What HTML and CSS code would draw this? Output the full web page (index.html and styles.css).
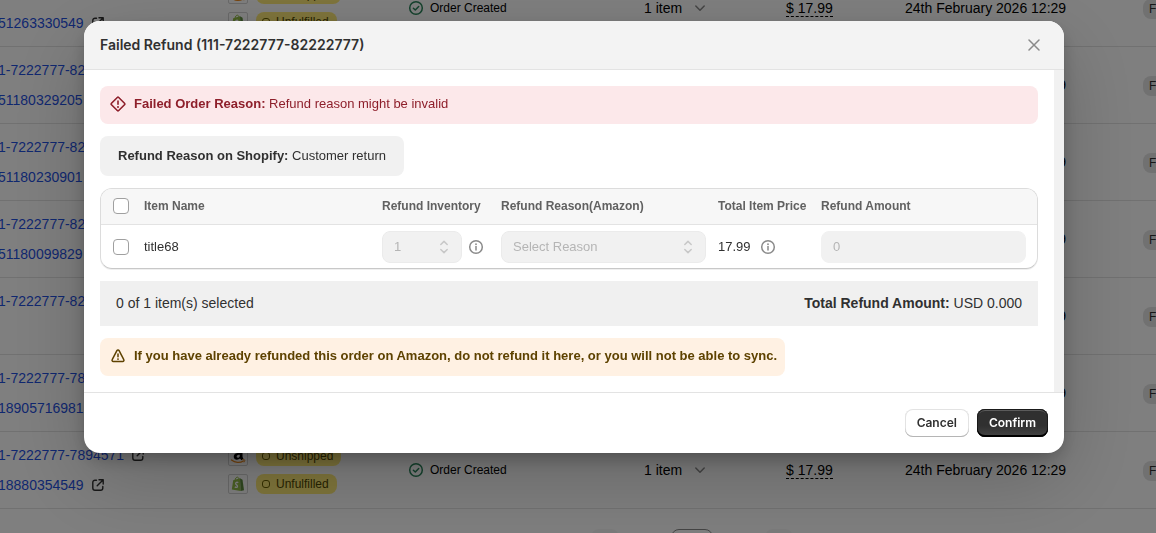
FILE: index.html
```html
<!DOCTYPE html>
<html lang="en">
<head>
    <meta charset="UTF-8">
    <meta name="viewport" content="width=device-width, initial-scale=1.0">
    <title>Failed Refund</title>
    <link rel="stylesheet" href="styles.css">
    <script src="orders.js" defer></script>
</head>
<body>
    <!-- Shared icons -->
    <svg class="sprite" aria-hidden="true">
        <symbol id="icon-external" viewBox="0 0 12 12">
            <path d="M4.500 1.200H3A2.200 2.200 0 0 0 .8 3.400V9A2.200 2.200 0 0 0 3 11.200h5.600A2.200 2.200 0 0 0 10.800 9V7.500M7 .8h4.200V5M11 1 5.200 6.800" fill="none" stroke="#303030" stroke-width="1.400" stroke-linecap="round" stroke-linejoin="round"/>
        </symbol>
        <symbol id="icon-amazon" viewBox="0 0 20 20">
            <path transform="translate(-2.500 -1) scale(1.250 1.150)" d="M11.600 11.800c-1.700 1.700-5 1.300-5-1.500 0-2.800 2.700-3.400 4.800-3.500V6.400c0-1.500-2-1.300-2.300 0L6.900 6.100C7.300 3 13.600 2.700 13.600 6.200v3.900c0 .8.300 1 .8 1.600l-1.600 1.500zM11.400 8.400c-1.400 0-2.500.4-2.500 1.700 0 1.500 2.500 1.500 2.500-.8z" fill="#000"/>
            <path d="M3.500 14c3.500 2.900 8.500 3 12 .9" fill="none" stroke="#f08a1c" stroke-width="1.200" stroke-linecap="round"/>
            <path d="M14.300 13.700c2.900-.6 2.900.6 1.700 2.600" fill="none" stroke="#f08a1c" stroke-width="1"/>
        </symbol>
        <symbol id="icon-shopify" viewBox="0 0 20 20">
            <path d="M5.200 6.300 12 4.300l.7 12.700-8.900-1.600z" fill="#95bf47"/>
            <path d="m12 4.300 2.500 1.500 1.500 10.400-3.300.8z" fill="#5e8e3e"/>
            <path d="M7 6.500C7.200 4.300 8.500 3 9.600 3.200c1 .2 1.300 1.400 1.400 2.500" fill="none" stroke="#95bf47" stroke-width="1"/>
            <path d="M10.300 8.600c-1.300-.7-2.700-.3-2.700.9 0 1.300 2 1.500 1.900 2.900-.1 1.300-1.600 1.300-2.700.5" fill="none" stroke="#fff" stroke-width="1.300"/>
        </symbol>
        <symbol id="icon-check" viewBox="0 0 16 16">
            <circle cx="8" cy="8" r="6.300" fill="none" stroke="#29845a" stroke-width="1.500"/>
            <path d="m5.400 8.200 1.900 1.800 3.400-3.500" fill="none" stroke="#29845a" stroke-width="1.500" stroke-linecap="round" stroke-linejoin="round"/>
        </symbol>
        <symbol id="icon-chevron" viewBox="0 0 12 12">
            <path d="m1.800 4 4.200 4.200L10.200 4" fill="none" stroke="#8a8a8a" stroke-width="1.500" stroke-linecap="round" stroke-linejoin="round"/>
        </symbol>
        <symbol id="icon-info" viewBox="0 0 16 16">
            <circle cx="8" cy="8" r="6.300" fill="none" stroke="#8a8a8a" stroke-width="1.500"/>
            <path d="M8 7.600v3.400" fill="none" stroke="#8a8a8a" stroke-width="1.500" stroke-linecap="round"/>
            <circle cx="8" cy="5.200" r="0.900" fill="#8a8a8a"/>
        </symbol>
        <symbol id="icon-updown" viewBox="0 0 12 16">
            <path d="M2.800 5.500 6 2.400l3.200 3.100M2.800 10.500 6 13.600l3.200-3.100" fill="none" stroke="#c8c8c8" stroke-width="1.500" stroke-linecap="round" stroke-linejoin="round"/>
        </symbol>
    </svg>

    <main class="orders">
        <table class="orders-table">
            <colgroup>
                <col class="col-ids"><col class="col-status"><col class="col-created">
                <col class="col-items"><col class="col-price"><col class="col-date"><col class="col-state">
            </colgroup>
            <tbody id="orderRows"></tbody>
        </table>
        <div class="pagination">
            <span class="page-step"></span>
            <span class="page-current"></span>
            <span class="page-step"></span>
        </div>
    </main>

    <div class="overlay">
        <div class="modal" role="dialog" aria-modal="true" aria-labelledby="modalTitle">
            <header class="modal-header">
                <h2 id="modalTitle">Failed Refund (111-7222777-82222777)</h2>
                <button type="button" class="close" aria-label="Close">
                    <svg viewBox="0 0 12 12" width="12" height="12"><path d="m1 1 10 10M11 1 1 11" fill="none" stroke="#8a8a8a" stroke-width="1.500" stroke-linecap="round"/></svg>
                </button>
            </header>

            <div class="modal-body">
                <div class="banner banner-critical">
                    <svg viewBox="0 0 16 16" width="16" height="16"><path d="M7.300 1.500a1 1 0 0 1 1.400 0l5.800 5.800a1 1 0 0 1 0 1.400l-5.800 5.800a1 1 0 0 1-1.400 0L1.500 8.700a1 1 0 0 1 0-1.400zM8 5v3.300" fill="none" stroke="#8e1f2b" stroke-width="1.600" stroke-linecap="round"/><circle cx="8" cy="10.900" r="1" fill="#8e1f2b"/></svg>
                    <p><b>Failed Order Reason:</b> Refund reason might be invalid</p>
                </div>

                <p class="reason"><b>Refund Reason on Shopify:</b> Customer return</p>

                <table class="items">
                    <colgroup>
                        <col class="col-check"><col><col class="col-inventory">
                        <col class="col-reason"><col class="col-total"><col class="col-amount">
                    </colgroup>
                    <thead>
                        <tr>
                            <th><input type="checkbox" aria-label="Select all items"></th>
                            <th>Item Name</th>
                            <th>Refund Inventory</th>
                            <th>Refund Reason(Amazon)</th>
                            <th>Total Item Price</th>
                            <th>Refund Amount</th>
                        </tr>
                    </thead>
                    <tbody>
                        <tr>
                            <td><input type="checkbox" aria-label="Select title68"></td>
                            <td>title68</td>
                            <td>
                                <div class="with-info">
                                    <div class="select select-small">
                                        <select aria-label="Refund Inventory" disabled><option>1</option></select>
                                        <svg class="updown"><use href="#icon-updown"/></svg>
                                    </div>
                                    <svg class="icon-16"><use href="#icon-info"/></svg>
                                </div>
                            </td>
                            <td>
                                <div class="select">
                                    <select aria-label="Refund Reason" disabled><option>Select Reason</option></select>
                                    <svg class="updown"><use href="#icon-updown"/></svg>
                                </div>
                            </td>
                            <td>
                                <div class="with-info price">
                                    <span>17.99</span>
                                    <svg class="icon-16"><use href="#icon-info"/></svg>
                                </div>
                            </td>
                            <td><input type="text" class="amount" aria-label="Refund Amount" value="0" disabled></td>
                        </tr>
                    </tbody>
                </table>

                <div class="summary">
                    <span>0 of 1 item(s) selected</span>
                    <span><b>Total Refund Amount:</b> USD 0.000</span>
                </div>

                <div class="banner banner-warning">
                    <svg viewBox="0 0 16 16" width="16" height="16"><path d="M6.900 2.600a1.250 1.250 0 0 1 2.200 0l4.700 9.100a1.200 1.200 0 0 1-1.100 1.800H3.300a1.200 1.200 0 0 1-1.100-1.800zM8 6v2.800" fill="none" stroke="#5e4200" stroke-width="1.500" stroke-linecap="round" stroke-linejoin="round"/><circle cx="8" cy="11.100" r="0.900" fill="#5e4200"/></svg>
                    <p><b>If you have already refunded this order on Amazon, do not refund it here, or you will not be able to sync.</b></p>
                </div>
            </div>

            <footer class="modal-footer">
                <button type="button" class="btn">Cancel</button>
                <button type="button" class="btn btn-primary">Confirm</button>
            </footer>
        </div>
    </div>
</body>
</html>
```
FILE: orders.js
```js
// [amazon order id, shopify order id]
const orders = [
    ["1-7222777-8222277", "51263330549"],
    ["1-7222777-8222277", "51180329205"],
    ["1-7222777-8222277", "51180230901"],
    ["1-7222777-8222277", "51180099829"],
    ["1-7222777-8222277", ""],
    ["1-7222777-7894571", "18905716981"],
    ["1-7222777-7894571", "18880354549"]
];

function orderLink(id) {
    if (!id) return '<div class="order-link"></div>';
    return `<div class="order-link"><a href="#">${id}</a><svg class="external"><use href="#icon-external"/></svg></div>`;
}

function badge(icon, label) {
    return `<div class="status"><span class="logo"><svg><use href="#${icon}"/></svg></span><span class="badge">${label}</span></div>`;
}

document.getElementById("orderRows").innerHTML = orders.map(([amazonId, shopifyId]) => `
    <tr>
        <td>${orderLink(amazonId)}${orderLink(shopifyId)}</td>
        <td>${badge("icon-amazon", "Unshipped")}${badge("icon-shopify", "Unfulfilled")}</td>
        <td><div class="created"><svg class="icon-16"><use href="#icon-check"/></svg>Order Created</div></td>
        <td><div class="count">1 item<svg class="chevron"><use href="#icon-chevron"/></svg></div></td>
        <td><span class="money">$ 17.99</span></td>
        <td>24th February 2026 12:29</td>
        <td><span class="state">Failed</span></td>
    </tr>`).join("");
```
FILE: styles.css
```css
*, *::before {
    box-sizing: border-box;
}
body {
    margin: 0;
    height: 100vh;
    overflow: hidden;
    font-family: "Liberation Sans", Arial, sans-serif;
    font-size: 13px;
    line-height: 20px;
    color: #303030;
    background: #fff;
}
h2, p {
    margin: 0;
}
svg {
    flex: none;
}
.sprite {
    display: none;
}
.icon-16 {
    width: 16px;
    height: 16px;
}

/* Orders list, scrolled part of the way down */
.orders {
    height: 100vh;
    overflow: hidden;
}
.orders-table {
    width: 1240px;
    margin: -30px 0 0 -2px;
    table-layout: fixed;
    border-collapse: separate;
    border-spacing: 0;
    font-size: 14px;
    color: #000;
}
.orders-table td {
    height: 77px;
    padding: 0;
    border-bottom: 1px solid #e3e3e3;
    white-space: nowrap;
}
.col-ids { width: 230px; }
.col-status { width: 180px; }
.col-created { width: 236px; }
.col-items { width: 142px; }
.col-price { width: 119px; }
.col-date { width: 238px; }
.order-link {
    display: flex;
    align-items: center;
    gap: 8px;
    height: 30px;
}
.order-link a {
    color: #1f50e0;
    text-decoration: none;
}
.external {
    width: 12px;
    height: 12px;
}
.status {
    display: flex;
    gap: 8px;
}
.status + .status {
    margin-top: 8px;
}
.logo {
    width: 20px;
    height: 20px;
    border: 1px solid #d4d4d4;
    border-radius: 2px;
}
.logo svg {
    display: block;
    width: 20px;
    height: 20px;
    margin: -1px;
}
.badge {
    display: flex;
    align-items: center;
    gap: 6px;
    height: 20px;
    padding: 0 8px 0 6px;
    border-radius: 8px;
    font-size: 12px;
    color: #4f4700;
    background: #ffeb78;
}
.badge::before {
    content: "";
    width: 8px;
    height: 8px;
    border: 1px solid #6b6000;
    border-radius: 3px;
}
.created {
    display: flex;
    align-items: center;
    gap: 6px;
    font-size: 12px;
}
.count {
    display: flex;
    align-items: center;
    gap: 12px;
}
.chevron {
    width: 12px;
    height: 12px;
}
.money {
    border-bottom: 1px dashed #000;
}
.state {
    padding: 3px 6px;
    border-radius: 8px;
    font-size: 12px;
    color: #303030;
    background: #e3e3e3;
}
.pagination {
    display: flex;
    justify-content: center;
    gap: 52px;
    padding: 20px 0 20px 228px;
}
.page-step, .page-current {
    width: 28px;
    height: 28px;
    border-radius: 8px;
    background: #f7f7f7;
}
.page-current {
    width: 42px;
    border: 1px solid #8a8a8a;
    background: #fff;
}

/* Modal */
.overlay {
    position: fixed;
    inset: 0;
    display: flex;
    justify-content: center;
    align-items: flex-start;
    padding: 21px 8px 21px 0;
    background: rgba(0, 0, 0, 0.5);
}
.modal {
    width: 86%;
    max-width: 980px;
    overflow: hidden;
    border-radius: 16px;
    background: #fff;
    box-shadow: 0 26px 80px rgba(0, 0, 0, 0.2), 0 8px 20px -4px rgba(0, 0, 0, 0.3), 0 0 1px rgba(0, 0, 0, 0.2);
}
.modal-header {
    display: flex;
    align-items: center;
    justify-content: space-between;
    padding: 14px 24px 14px 16px;
    border-bottom: 1px solid #e3e3e3;
    background: #f3f3f3;
}
.modal-header h2 {
    font-family: Inter, sans-serif;
    font-size: 14px;
    line-height: 20px;
    font-weight: 600;
}
.close {
    display: flex;
    padding: 0;
    border: none;
    background: none;
    cursor: pointer;
}
.modal-body {
    display: flex;
    flex-direction: column;
    align-items: flex-start;
    gap: 12px;
    padding: 16px;
    border-right: 10px solid #f1f1f1;
}
.banner {
    display: flex;
    align-items: center;
    gap: 8px;
    min-height: 38px;
    padding: 8px 8px 10px 10px;
    border-radius: 8px;
}
.banner-critical {
    width: 100%;
    color: #8e1f2b;
    background: #fce8ea;
}
.banner-warning {
    color: #5e4200;
    background: #fff1e3;
}
.reason {
    padding: 10px 18px;
    border-radius: 8px;
    background: #f1f1f1;
}

/* Refund items */
.items {
    width: 100%;
    table-layout: fixed;
    border-collapse: separate;
    border-spacing: 0;
    border: 1px solid #dcdcdc;
    border-bottom-color: #c8c8c8;
    border-radius: 12px;
    overflow: hidden;
    box-shadow: 0 1px 0 rgba(26, 26, 26, 0.07);
}
.items th {
    height: 36px;
    padding: 0 6px 2px;
    border-bottom: 1px solid #e3e3e3;
    font-size: 12px;
    text-align: left;
    white-space: nowrap;
    color: #616161;
    background: #f7f7f7;
}
.items td {
    padding: 6px 6px 5px;
}
.items th:first-child, .items td:first-child {
    padding-left: 12px;
}
.items th:last-child, .items td:last-child {
    padding-right: 11px;
}
.col-check { width: 37px; }
.col-inventory { width: 119px; }
.col-reason { width: 217px; }
.col-total { width: 103px; }
.col-amount { width: 222px; }
.items input[type="checkbox"] {
    display: block;
    width: 16px;
    height: 16px;
    margin: 0;
    appearance: none;
    border: 1px solid #a0a0a0;
    border-radius: 4px;
    background: #fff;
}
.with-info {
    display: flex;
    align-items: center;
    gap: 6px;
}
.price {
    gap: 9px;
}
.select {
    position: relative;
}
.select-small {
    width: 80px;
}
.select select, .amount {
    display: block;
    width: 100%;
    height: 32px;
    padding: 0 11px;
    border: 1px solid #ebebeb;
    border-radius: 8px;
    font: inherit;
    color: #b5b5b5;
    background: #f1f1f1;
    opacity: 1;
    appearance: none;
}
.amount {
    border-color: #f1f1f1;
    padding-bottom: 2px;
}
.updown {
    position: absolute;
    top: 8px;
    right: 12px;
    width: 12px;
    height: 16px;
    pointer-events: none;
}
.summary {
    display: flex;
    justify-content: space-between;
    width: 100%;
    padding: 12px 16px;
    font-size: 14px;
    line-height: 21px;
    background: #f0f0f0;
}

.modal-footer {
    display: flex;
    justify-content: flex-end;
    gap: 8px;
    padding: 16px;
    border-top: 1px solid #e3e3e3;
}
.btn {
    height: 28px;
    padding: 0 12px 2px;
    border: none;
    border-radius: 8px;
    font-family: Inter, sans-serif;
    font-size: 12px;
    font-weight: 600;
    color: #303030;
    background: #fff;
    box-shadow: inset 0 -1px 0 #b5b5b5, inset 0 0 0 1px #e3e3e3;
    cursor: pointer;
}
.btn-primary {
    color: #fff;
    background: linear-gradient(#303030 60%, #454545);
    box-shadow: inset 0 -2px 0 #000, inset 0 0 0 1px #1a1a1a, inset 0 2px 0 #5c5c5c;
}
```
